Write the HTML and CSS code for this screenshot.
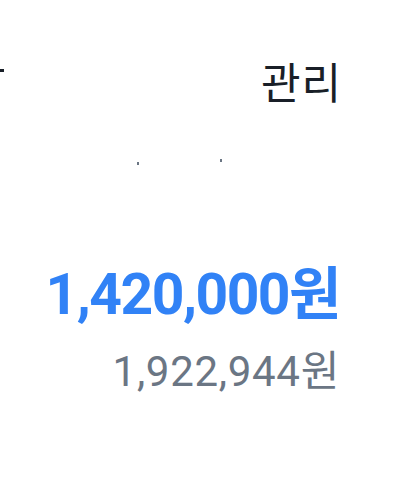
FILE: index.html
```html
<!DOCTYPE html>
<html lang="ko">
<head>
  <meta charset="UTF-8">
  <title>자산 관리</title>
  <link rel="stylesheet" href="styles.css">
</head>
<body>
  <div class="screen">
    <div class="top-bar">
      <span class="back-tail"></span>
      <a class="manage" href="#">관리</a>
    </div>

    <div class="tabs">
      <span class="tick"></span>
      <span class="tick tick-high"></span>
    </div>

    <div class="summary">
      <div class="amount">1,420,000원</div>
      <div class="sub-amount">1,922,944원</div>
    </div>
  </div>
</body>
</html>
```

FILE: styles.css
```css
body {
  margin: 0;
  background: #ffffff;
  font-family: "Roboto", "Noto Sans CJK KR", sans-serif;
}
.screen {
  width: 414px;
  height: 484px;
  overflow: hidden;
}
.top-bar {
  display: flex;
  justify-content: space-between;
  align-items: flex-start;
  height: 110px;
  padding-right: 72px;
}
.back-tail {
  display: block;
  width: 4px;
  height: 3px;
  margin-top: 69px;
  background: #191f28;
}
.manage {
  margin-top: 50px;
  font-family: "Noto Sans CJK KR", sans-serif;
  font-size: 43px;
  line-height: 60px;
  letter-spacing: 1px;
  color: #191f28;
  text-decoration: none;
}
.tabs {
  position: relative;
  height: 152px;
}
.tick {
  position: absolute;
  left: 137px;
  top: 52px;
  width: 2px;
  height: 3px;
  background: #6b7684;
}
.tick-high {
  left: 220px;
  top: 49px;
}
.summary {
  display: flex;
  flex-direction: column;
  align-items: flex-end;
  padding-right: 74px;
}
.amount {
  font-size: 57px;
  font-weight: 700;
  line-height: 66px;
  letter-spacing: -1.5px;
  color: #3182f6;
}
.sub-amount {
  margin-top: 18px;
  font-size: 42px;
  line-height: 52px;
  letter-spacing: 0.7px;
  color: #6b7684;
}
```
